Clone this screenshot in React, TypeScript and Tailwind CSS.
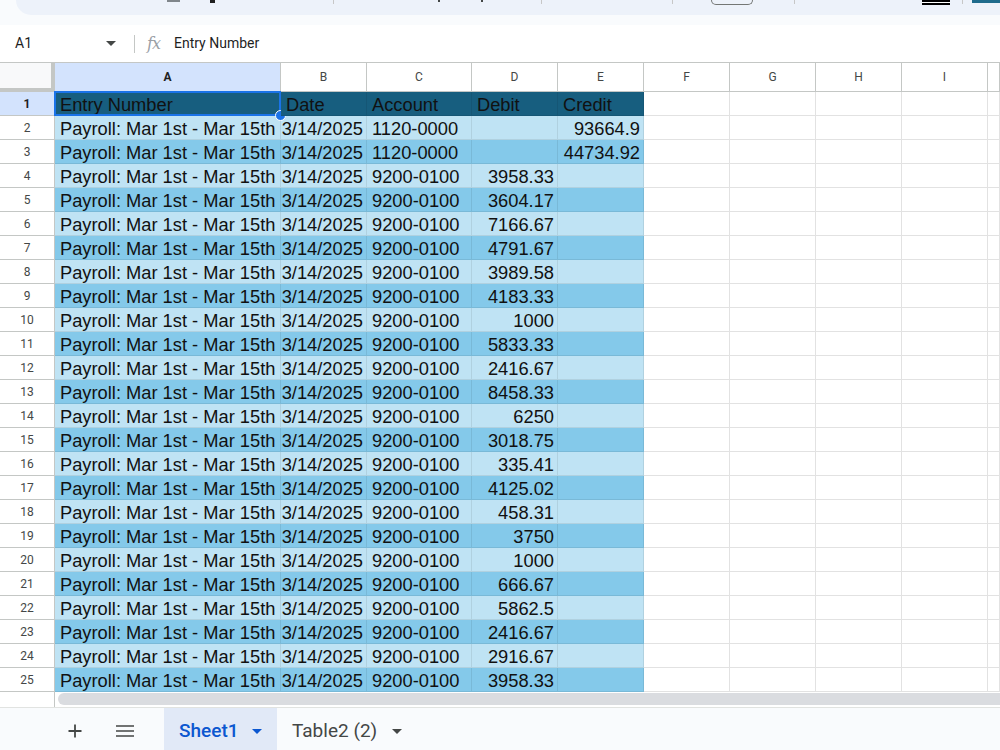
import React from 'react';

type Entry = {
    account: string;
    debit?: string;
    credit?: string;
};

const entries: Entry[] = [
    { account: '1120-0000', credit: '93664.9' },
    { account: '1120-0000', credit: '44734.92' },
    { account: '9200-0100', debit: '3958.33' },
    { account: '9200-0100', debit: '3604.17' },
    { account: '9200-0100', debit: '7166.67' },
    { account: '9200-0100', debit: '4791.67' },
    { account: '9200-0100', debit: '3989.58' },
    { account: '9200-0100', debit: '4183.33' },
    { account: '9200-0100', debit: '1000' },
    { account: '9200-0100', debit: '5833.33' },
    { account: '9200-0100', debit: '2416.67' },
    { account: '9200-0100', debit: '8458.33' },
    { account: '9200-0100', debit: '6250' },
    { account: '9200-0100', debit: '3018.75' },
    { account: '9200-0100', debit: '335.41' },
    { account: '9200-0100', debit: '4125.02' },
    { account: '9200-0100', debit: '458.31' },
    { account: '9200-0100', debit: '3750' },
    { account: '9200-0100', debit: '1000' },
    { account: '9200-0100', debit: '666.67' },
    { account: '9200-0100', debit: '5862.5' },
    { account: '9200-0100', debit: '2416.67' },
    { account: '9200-0100', debit: '2916.67' },
    { account: '9200-0100', debit: '3958.33' },
];

const columnLetters = ['A', 'B', 'C', 'D', 'E', 'F', 'G', 'H', 'I', ''];

// row number column + A..I + the sliver of J
const gridCols = 'grid grid-cols-[55px_226px_86px_105px_86px_86px_86px_86px_86px_86px_1fr]';

// shared text style for sheet cells (Arial metrics)
const cellText = "font-['Liberation_Sans',Arial,sans-serif] text-[18.3px] leading-[20px] text-[#111] whitespace-nowrap";

const Toolbar: React.FC = () => (
    <div className="h-[25px] bg-[#f9fbfd]">
        <div className="ml-[16px] h-[15px] bg-[#edf2fa] rounded-bl-[20px] flex items-start overflow-hidden">
            <div className="ml-[151px] w-[13px] h-[2px] bg-[#80868b]" />
            <div className="ml-[30px] w-[5px] h-[3px] bg-[#1f1f1f]" />
            <div className="ml-[118px] w-px h-[4px] bg-[#c7c7c7]" />
            <div className="ml-[104px] w-[2px] h-[2px] bg-[#444746]" />
            <div className="ml-[41px] w-[2px] h-[2px] bg-[#444746]" />
            <div className="ml-[58px] w-px h-[4px] bg-[#c7c7c7]" />
            <div className="ml-[130px] w-px h-[4px] bg-[#c7c7c7]" />
            <div className="ml-[38px] w-[42px] h-[5px] border border-t-0 border-[#747775] rounded-b-[5px]" />
            <div className="ml-[41px] w-px h-[4px] bg-[#c7c7c7]" />
            <div className="ml-[127px] w-[28px] h-[5px] border-t-2 border-b-2 border-black bg-white" />
            <div className="ml-[12px] w-px h-[4px] bg-[#c7c7c7]" />
            <div className="ml-[9px] w-[28px] h-[3px] bg-[#1f6b8c]" />
        </div>
    </div>
);

const FormulaBar: React.FC = () => (
    <div className="h-[37px] flex items-center bg-white font-['Roboto',sans-serif] text-[14px] text-[#1f1f1f]">
        <span className="ml-[15px] w-[88px]">A1</span>
        <svg width="10" height="6" viewBox="0 0 10 6" className="ml-[3px]">
            <path d="M0 0 L10 0 L5 5 Z" fill="#444746" />
        </svg>
        <div className="ml-[18px] w-px h-[18px] bg-[#c4c7c5]" />
        <span className="ml-[12px] font-['DejaVu_Serif',serif] italic text-[16px] text-[#9aa0a6] tracking-[-1px]">fx</span>
        <span className="ml-[14px]">Entry Number</span>
    </div>
);

const ColumnHeaders: React.FC = () => (
    <div className={`${gridCols} h-[30px] border-t border-[#c4c7c5] font-['Roboto',sans-serif] text-[12px]`}>
        <div className="bg-[#f8f9fa] border-r-[4px] border-b-[4px] border-[#c4c7c5]" />
        {columnLetters.map((letter, i) => (
            <div
                key={i}
                className={
                    i === 0
                        ? 'flex items-center justify-center bg-[#d3e3fd] border-r border-b border-[#c4c7c5] font-bold text-[#1f1f1f]'
                        : 'flex items-center justify-center bg-white border-r border-b border-[#c4c7c5] text-[#444746]'
                }
            >
                {letter}
            </div>
        ))}
    </div>
);

const HeaderRow: React.FC = () => {
    const labels = ['Entry Number', 'Date', 'Account', 'Debit', 'Credit'];
    return (
        <div className={`${gridCols} h-[24px]`}>
            <div className="flex items-center justify-center bg-[#d3e3fd] border-r border-b border-[#c4c7c5] font-['Roboto',sans-serif] text-[12px] font-bold text-[#1f1f1f]">
                1
            </div>
            {labels.map((label, i) => (
                <div
                    key={label}
                    className={`relative flex items-end pl-[5px] bg-[#175e7f] border-r border-b border-[#00000014] ${cellText}`}
                >
                    {label}
                    {i === 0 && (
                        <>
                            <div className="absolute -left-px -top-px -right-px -bottom-px border-2 border-[#1a73e8]" />
                            <div className="absolute -right-[6px] -bottom-[6px] w-[11px] h-[11px] rounded-full bg-[#1a73e8] border border-white" />
                        </>
                    )}
                </div>
            ))}
            {[0, 1, 2, 3, 4].map((i) => (
                <div key={i} className="bg-white border-r border-b border-[#e2e2e2]" />
            ))}
        </div>
    );
};

const DataRow: React.FC<{ row: number; entry: Entry }> = ({ row, entry }) => {
    const band = row % 2 === 0 ? 'bg-[#bfe3f4]' : 'bg-[#84c9ea]';
    const cell = `flex items-end ${band} border-r border-b border-[#00000014] ${cellText}`;
    return (
        <div className={`${gridCols} h-[24px]`}>
            <div className="flex items-center justify-center bg-white border-r border-b border-[#c4c7c5] font-['Roboto',sans-serif] text-[12px] text-[#444746]">
                {row}
            </div>
            <div className={`${cell} pl-[5px]`}>Payroll: Mar 1st - Mar 15th</div>
            {/* dates and amounts are numbers, so they sit on the right */}
            <div className={`${cell} justify-end pr-[3px]`}>3/14/2025</div>
            <div className={`${cell} pl-[5px]`}>{entry.account}</div>
            <div className={`${cell} justify-end pr-[3px]`}>{entry.debit}</div>
            <div className={`${cell} justify-end pr-[3px]`}>{entry.credit}</div>
            {[0, 1, 2, 3, 4].map((i) => (
                <div key={i} className="bg-white border-r border-b border-[#e2e2e2]" />
            ))}
        </div>
    );
};

const ScrollRow: React.FC = () => (
    <div className="h-[16px] flex border-b border-[#e1e3e1]">
        <div className="w-[55px] bg-white border-r border-[#c4c7c5]" />
        <div className="flex-1 bg-white pt-[1px] pl-[3px]">
            <div className="h-[12px] bg-[#dadce0] rounded-l-full" />
        </div>
    </div>
);

const SheetTabs: React.FC = () => (
    <div className="h-[42px] flex items-stretch bg-[#f9fbfd] font-['Roboto',sans-serif] text-[19px]">
        <div className="ml-[67px] flex items-center pt-[4px]">
            <svg width="16" height="16" viewBox="0 0 16 16">
                <path d="M8 1.5 V14.5 M1.5 8 H14.5" stroke="#444746" strokeWidth="1.8" />
            </svg>
        </div>
        <div className="ml-[33px] flex items-center pt-[4px]">
            <svg width="18" height="14" viewBox="0 0 18 14">
                <path d="M0 2 H18 M0 7 H18 M0 12 H18" stroke="#444746" strokeWidth="1.6" />
            </svg>
        </div>
        <div className="ml-[30px] w-[113px] bg-[#e1e9f7] flex items-center pl-[15px] pt-[4px] font-medium text-[#0b57d0]">
            <span>Sheet1</span>
            <svg width="10" height="5" viewBox="0 0 10 5" className="ml-[13px]">
                <path d="M0 0 H10 L5 5 Z" fill="#0b57d0" />
            </svg>
        </div>
        <div className="ml-[15px] flex items-center pt-[4px] text-[#444746]">
            <span>Table2 (2)</span>
            <svg width="10" height="5" viewBox="0 0 10 5" className="ml-[15px]">
                <path d="M0 0 H10 L5 5 Z" fill="#444746" />
            </svg>
        </div>
    </div>
);

export default function App() {
    return (
        <div className="w-[1000px] h-[750px] overflow-hidden flex flex-col bg-white">
            <Toolbar />
            <FormulaBar />
            <ColumnHeaders />
            <HeaderRow />
            {entries.map((entry, i) => (
                <DataRow key={i} row={i + 2} entry={entry} />
            ))}
            <ScrollRow />
            <SheetTabs />
        </div>
    );
}
